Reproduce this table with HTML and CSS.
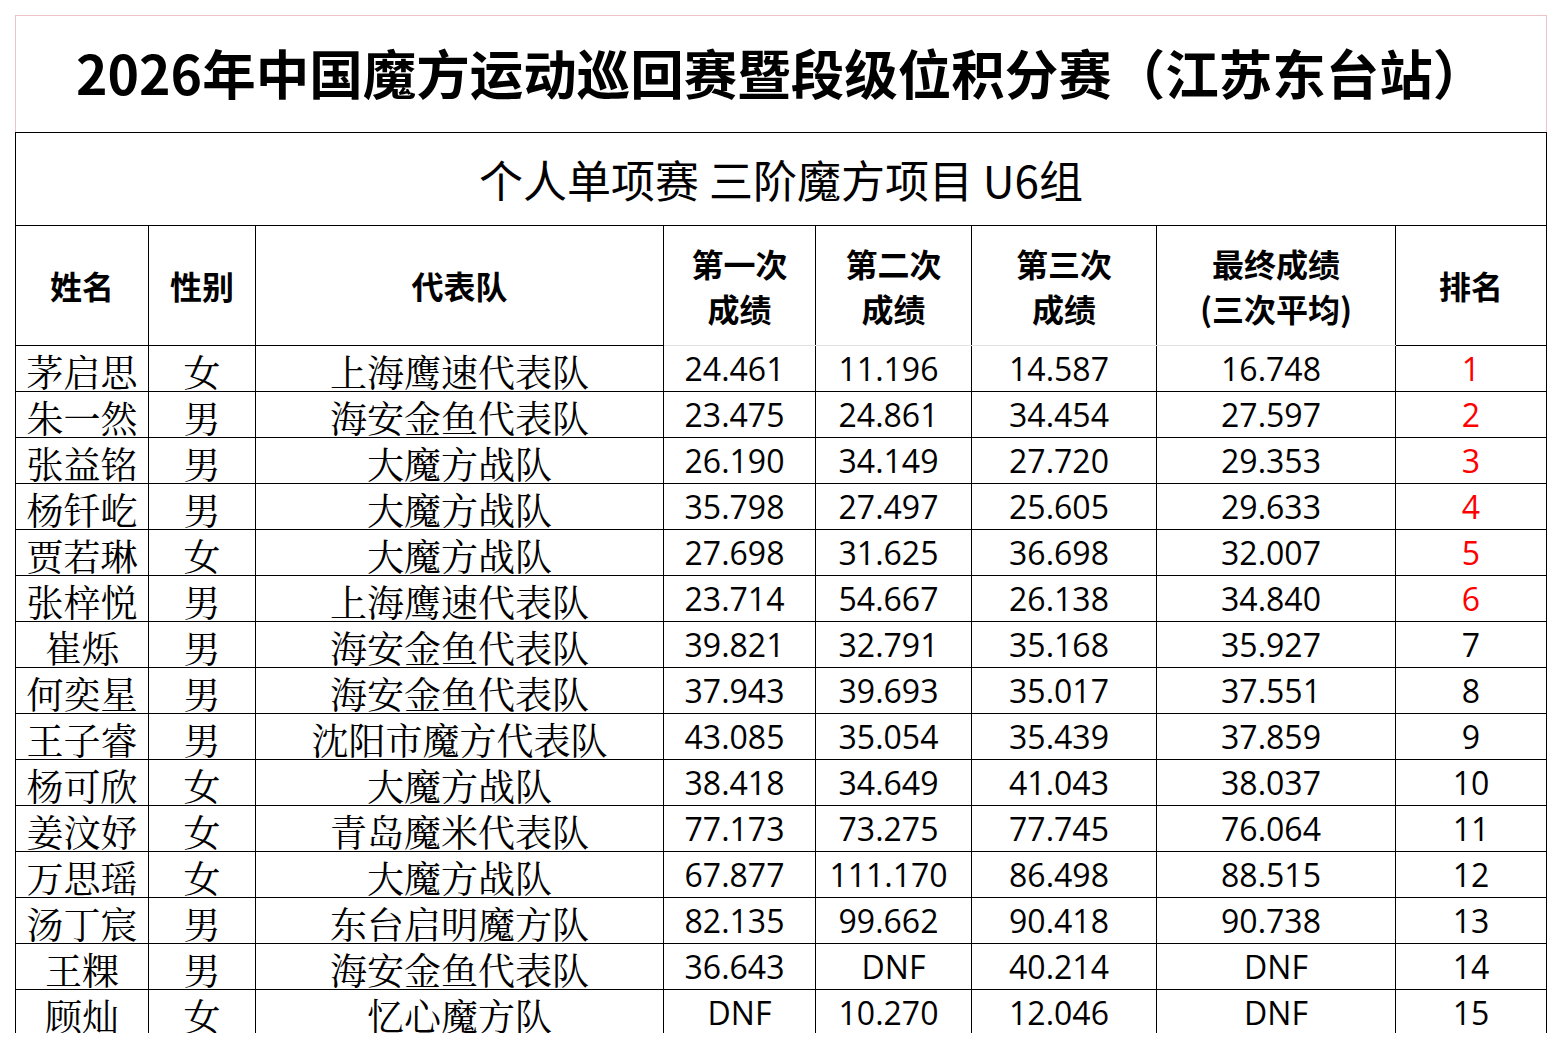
FILE: index.html
```html
<!DOCTYPE html>
<html lang="zh-CN">
<head>
<meta charset="utf-8">
<title>2026年中国魔方运动巡回赛暨段级位积分赛（江苏东台站）</title>
<link rel="stylesheet" href="styles.css">
</head>
<body>
<div class="sheet">
  <table class="results">
    <colgroup>
      <col class="c-name"><col class="c-sex"><col class="c-team"><col class="c-r1"><col class="c-r2"><col class="c-r3"><col class="c-avg"><col class="c-rank">
    </colgroup>
    <tbody>
      <tr class="title-row"><td colspan="8" class="title">2026年中国魔方运动巡回赛暨段级位积分赛（江苏东台站）</td></tr>
      <tr class="sub-row"><td colspan="8" class="subtitle">个人单项赛 三阶魔方项目 U6组</td></tr>
      <tr class="head-row">
        <th>姓名</th>
        <th>性别</th>
        <th>代表队</th>
        <th class="soft">第一次<br>成绩</th>
        <th class="soft">第二次<br>成绩</th>
        <th class="soft">第三次<br>成绩</th>
        <th class="soft">最终成绩<br>(三次平均)</th>
        <th>排名</th>
      </tr>
      <tr class="data-row"><td class="cn">茅启思</td><td class="cn">女</td><td class="cn">上海鹰速代表队</td><td class="num t">24.461</td><td class="num t">11.196</td><td class="num t">14.587</td><td class="num t">16.748</td><td class="num red">1</td></tr>
      <tr class="data-row"><td class="cn">朱一然</td><td class="cn">男</td><td class="cn">海安金鱼代表队</td><td class="num t">23.475</td><td class="num t">24.861</td><td class="num t">34.454</td><td class="num t">27.597</td><td class="num red">2</td></tr>
      <tr class="data-row"><td class="cn">张益铭</td><td class="cn">男</td><td class="cn">大魔方战队</td><td class="num t">26.190</td><td class="num t">34.149</td><td class="num t">27.720</td><td class="num t">29.353</td><td class="num red">3</td></tr>
      <tr class="data-row"><td class="cn">杨钎屹</td><td class="cn">男</td><td class="cn">大魔方战队</td><td class="num t">35.798</td><td class="num t">27.497</td><td class="num t">25.605</td><td class="num t">29.633</td><td class="num red">4</td></tr>
      <tr class="data-row"><td class="cn">贾若琳</td><td class="cn">女</td><td class="cn">大魔方战队</td><td class="num t">27.698</td><td class="num t">31.625</td><td class="num t">36.698</td><td class="num t">32.007</td><td class="num red">5</td></tr>
      <tr class="data-row"><td class="cn">张梓悦</td><td class="cn">男</td><td class="cn">上海鹰速代表队</td><td class="num t">23.714</td><td class="num t">54.667</td><td class="num t">26.138</td><td class="num t">34.840</td><td class="num red">6</td></tr>
      <tr class="data-row"><td class="cn">崔烁</td><td class="cn">男</td><td class="cn">海安金鱼代表队</td><td class="num t">39.821</td><td class="num t">32.791</td><td class="num t">35.168</td><td class="num t">35.927</td><td class="num">7</td></tr>
      <tr class="data-row"><td class="cn">何奕星</td><td class="cn">男</td><td class="cn">海安金鱼代表队</td><td class="num t">37.943</td><td class="num t">39.693</td><td class="num t">35.017</td><td class="num t">37.551</td><td class="num">8</td></tr>
      <tr class="data-row"><td class="cn">王子睿</td><td class="cn">男</td><td class="cn">沈阳市魔方代表队</td><td class="num t">43.085</td><td class="num t">35.054</td><td class="num t">35.439</td><td class="num t">37.859</td><td class="num">9</td></tr>
      <tr class="data-row"><td class="cn">杨可欣</td><td class="cn">女</td><td class="cn">大魔方战队</td><td class="num t">38.418</td><td class="num t">34.649</td><td class="num t">41.043</td><td class="num t">38.037</td><td class="num">10</td></tr>
      <tr class="data-row"><td class="cn">姜汶妤</td><td class="cn">女</td><td class="cn">青岛魔米代表队</td><td class="num t">77.173</td><td class="num t">73.275</td><td class="num t">77.745</td><td class="num t">76.064</td><td class="num">11</td></tr>
      <tr class="data-row"><td class="cn">万思瑶</td><td class="cn">女</td><td class="cn">大魔方战队</td><td class="num t">67.877</td><td class="num t">111.170</td><td class="num t">86.498</td><td class="num t">88.515</td><td class="num">12</td></tr>
      <tr class="data-row"><td class="cn">汤丁宸</td><td class="cn">男</td><td class="cn">东台启明魔方队</td><td class="num t">82.135</td><td class="num t">99.662</td><td class="num t">90.418</td><td class="num t">90.738</td><td class="num">13</td></tr>
      <tr class="data-row"><td class="cn">王粿</td><td class="cn">男</td><td class="cn">海安金鱼代表队</td><td class="num t">36.643</td><td class="num">DNF</td><td class="num t">40.214</td><td class="num">DNF</td><td class="num">14</td></tr>
      <tr class="data-row"><td class="cn">顾灿</td><td class="cn">女</td><td class="cn">忆心魔方队</td><td class="num">DNF</td><td class="num t">10.270</td><td class="num t">12.046</td><td class="num">DNF</td><td class="num">15</td></tr>
      <tr class="data-row"><td class="cn">&nbsp;</td><td class="cn"></td><td class="cn"></td><td class="num"></td><td class="num"></td><td class="num"></td><td class="num"></td><td class="num"></td></tr>
    </tbody>
  </table>
</div>
</body>
</html>
```
FILE: styles.css
```css
html, body {
  margin: 0;
  padding: 0;
  background: #ffffff;
}

body {
  padding: 15px 0 0 15px;
  font-family: "Noto Sans CJK SC", "Noto Sans", sans-serif;
  color: #000;
}

.sheet {
  width: 1533px;
  height: 1018px;
  overflow: hidden;
}

.results {
  width: 1531px;
  border-collapse: collapse;
  table-layout: fixed;
}

.c-name { width: 133px; }
.c-sex { width: 107px; }
.c-team { width: 408px; }
.c-r1 { width: 152px; }
.c-r2 { width: 156px; }
.c-r3 { width: 185px; }
.c-avg { width: 239px; }
.c-rank { width: 151px; }

.results td,
.results th {
  border: 1px solid #000;
  padding: 0;
  text-align: center;
  vertical-align: middle;
  white-space: nowrap;
  box-sizing: border-box;
}

.results .title-row td.title {
  height: 117px;
  border-top: 1px solid #eec4c8;
  border-left: 1px solid #eec4c8;
  border-right: 1px solid #eec4c8;
  border-bottom: 1px solid #000;
  font-family: "Noto Sans CJK SC", sans-serif;
  font-weight: 700;
  font-size: 53.5px;
  line-height: 60px;
  padding-bottom: 4px;
}

.results .sub-row td.subtitle {
  height: 93px;
  font-family: "Noto Sans CJK SC", sans-serif;
  font-weight: 400;
  font-size: 44px;
  line-height: 50px;
}

.results .head-row th {
  height: 120px;
  font-family: "Noto Sans CJK SC", sans-serif;
  font-weight: 700;
  font-size: 32px;
  line-height: 45px;
}
.results .head-row th.soft {
  border-bottom-color: #e2e2e2;
}

.results .data-row td {
  height: 46px;
}

.results .data-row td.cn {
  font-family: "Noto Serif CJK SC", "Noto Serif CJK", "Noto Sans CJK SC", serif;
  font-size: 37px;
  line-height: 37px;
  padding-top: 6px;
}

.results .data-row td.num {
  font-family: "Open Sans", "Noto Sans", sans-serif;
  font-size: 32px;
  line-height: 38px;
}

.results .data-row td.t {
  padding-right: 10px;
}

.results .data-row td.red {
  color: #ff0000;
}
```
